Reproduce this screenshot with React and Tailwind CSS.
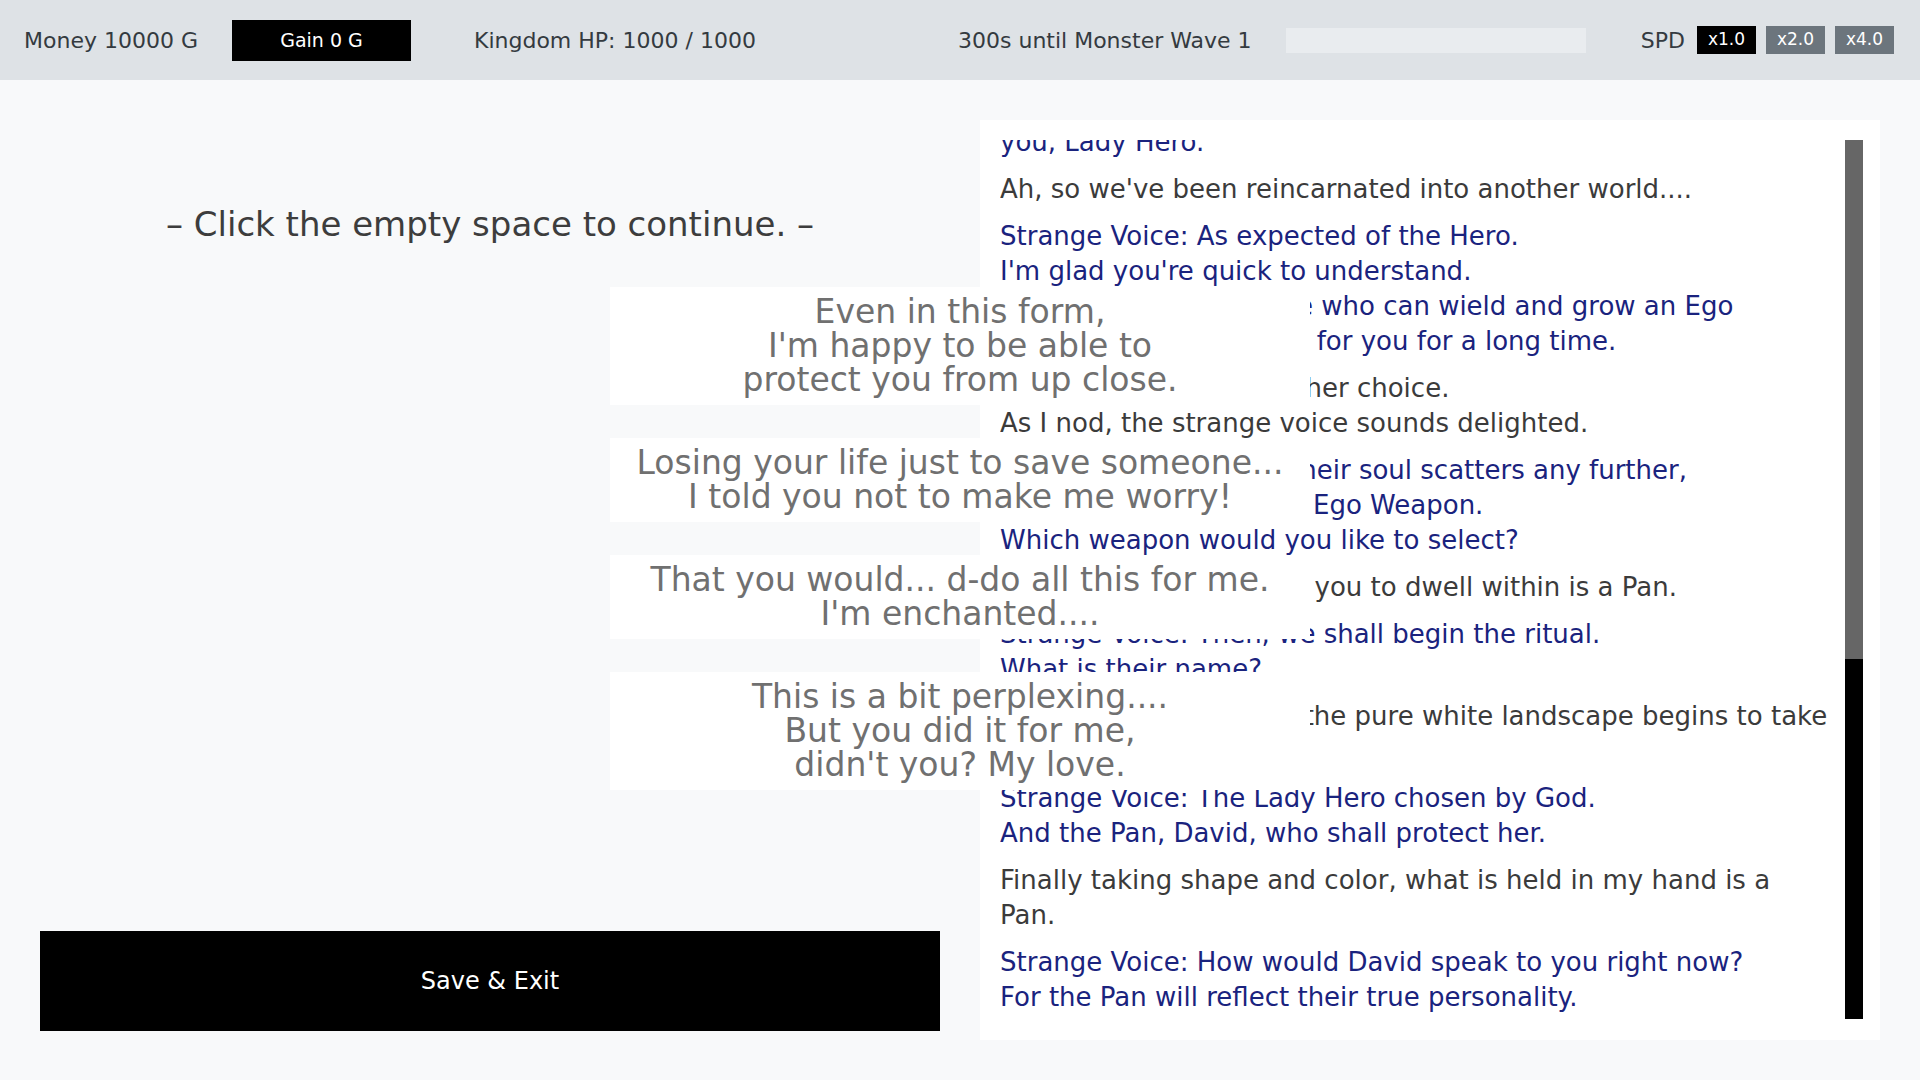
import { useState } from "react";

const LOG = [
  {
    voice: true,
    lines: [
      "Strange Voice: Welcome to the world beyond. We have awaited",
      "you, Lady Hero.",
    ],
  },
  { voice: false, lines: ["Ah, so we've been reincarnated into another world...."] },
  {
    voice: true,
    lines: [
      "Strange Voice: As expected of the Hero.",
      "I'm glad you're quick to understand.",
      "Strange Voice: Only one who can wield and grow an Ego",
      "Weapon. It has yearned for you for a long time.",
    ],
  },
  {
    voice: false,
    lines: [
      "I suppose there is no other choice.",
      "As I nod, the strange voice sounds delighted.",
    ],
  },
  {
    voice: true,
    lines: [
      "Strange Voice: Before their soul scatters any further,",
      "we will bind them to an Ego Weapon.",
      "Which weapon would you like to select?",
    ],
  },
  { voice: false, lines: ["The weapon I desire for you to dwell within is a Pan."] },
  {
    voice: true,
    lines: ["Strange Voice: Then, we shall begin the ritual.", "What is their name?"],
  },
  {
    voice: false,
    lines: [
      "Once I say their name, the pure white landscape begins to take",
      "on form.",
    ],
  },
  {
    voice: true,
    lines: [
      "Strange Voice: The Lady Hero chosen by God.",
      "And the Pan, David, who shall protect her.",
    ],
  },
  {
    voice: false,
    lines: ["Finally taking shape and color, what is held in my hand is a", "Pan."],
  },
  {
    voice: true,
    lines: [
      "Strange Voice: How would David speak to you right now?",
      "For the Pan will reflect their true personality.",
    ],
  },
];

const CHOICES = [
  ["Even in this form,", "I'm happy to be able to", "protect you from up close."],
  ["Losing your life just to save someone...", "I told you not to make me worry!"],
  ["That you would... d-do all this for me.", "I'm enchanted...."],
  ["This is a bit perplexing....", "But you did it for me,", "didn't you? My love."],
];

const SPEEDS = ["x1.0", "x2.0", "x4.0"];

export default function App() {
  const [speed, setSpeed] = useState("x1.0");

  return (
    <div className="relative h-screen w-full overflow-hidden bg-[#f8f9fa] font-['DejaVu_Sans',sans-serif]">
      {/* status bar */}
      <header className="flex h-20 items-center bg-[#dee2e6] pl-6 pr-[26px] text-[22px] text-[#343a40]">
        <span className="w-[172px] whitespace-nowrap">Money 10000 G</span>
        <div className="ml-[36px] flex h-[41px] w-[179px] items-center justify-center bg-black text-[19px] text-white">
          Gain 0 G
        </div>
        <span className="ml-[63px] w-[294px] whitespace-nowrap">Kingdom HP: 1000 / 1000</span>
        <span className="ml-[190px] w-[315px] whitespace-nowrap">300s until Monster Wave 1</span>
        <div className="ml-[13px] h-[25px] w-[300px] bg-[#e9ecef]" />
        <div className="ml-auto flex items-center">
          <span className="mr-3">SPD</span>
          <div className="flex gap-[10px]">
            {SPEEDS.map((s) => (
              <button
                key={s}
                onClick={() => setSpeed(s)}
                className={`flex h-[28px] w-[59px] items-center justify-center text-[17px] text-white ${
                  speed === s ? "bg-black" : "bg-[#6c757d]"
                }`}
              >
                {s}
              </button>
            ))}
          </div>
        </div>
      </header>

      <main className="grid h-[1000px] grid-cols-2 grid-rows-[minmax(0,1fr)] gap-10 p-10">
        {/* left column */}
        <div className="flex min-h-0 flex-col">
          <p className="pt-[87px] text-center text-[34px] leading-[34px] whitespace-nowrap text-[#3d3d3d]">
            – Click the empty space to continue. –
          </p>
          <div className="flex-1" />
          <button className="mb-[9px] h-[100px] w-full bg-black text-[24px] text-white">
            Save &amp; Exit
          </button>
        </div>

        {/* story log, pinned to the latest line */}
        <div className="flex min-h-0 overflow-hidden bg-white pt-5 pb-[21px] pl-5 pr-[17px]">
          <div className="flex min-h-0 flex-1 flex-col justify-end space-y-3 overflow-hidden pb-1 text-[26px] leading-[35px]">
            {LOG.map((p, i) => (
              <div
                key={i}
                className={`shrink-0 ${p.voice ? "text-[#1a237e]" : "text-[#3b3b3b]"}`}
              >
                {p.lines.map((l, j) => (
                  <div key={j} className="whitespace-nowrap">
                    {l}
                  </div>
                ))}
              </div>
            ))}
          </div>
          <div className="flex w-[18px] shrink-0 flex-col">
            <div className="h-[519px] bg-[#666666]" />
            <div className="flex-1 bg-black" />
          </div>
        </div>
      </main>

      {/* reply choices */}
      <div className="absolute left-1/2 top-[287px] flex w-[700px] -translate-x-1/2 flex-col gap-[33px]">
        {CHOICES.map((c, i) => (
          <div
            key={i}
            className="bg-white py-2 text-center text-[33px] leading-[34px] whitespace-nowrap text-[#707070]"
          >
            {c.map((l, j) => (
              <div key={j}>{l}</div>
            ))}
          </div>
        ))}
      </div>
    </div>
  );
}
